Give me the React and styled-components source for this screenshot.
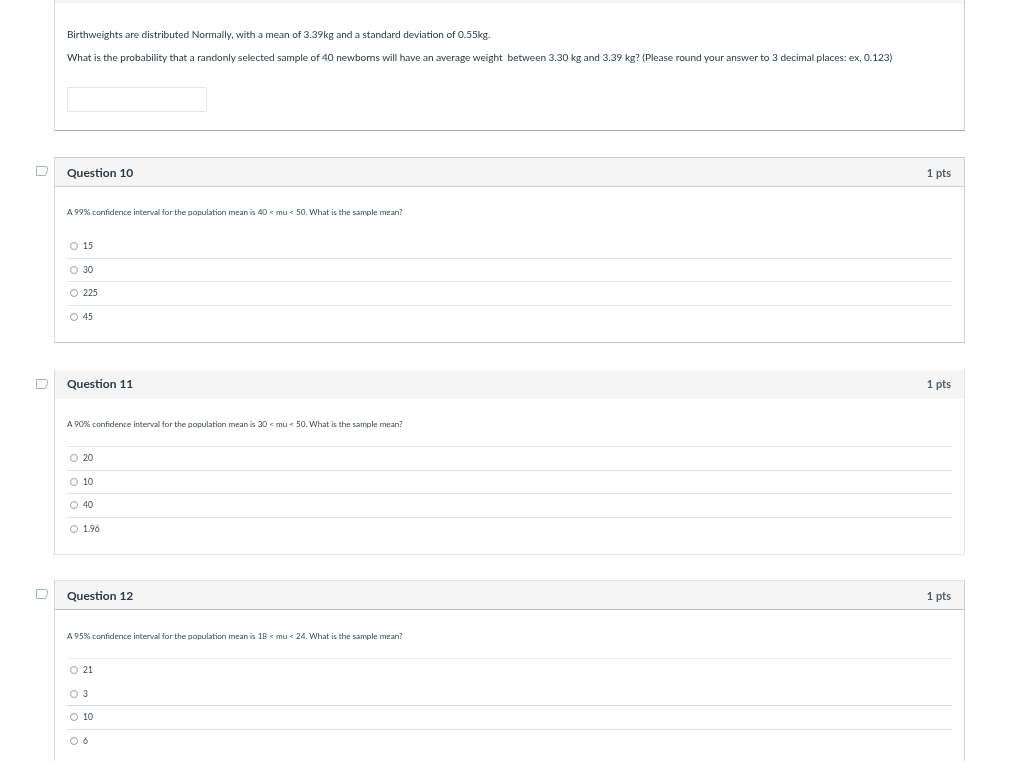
import React from 'react';
import styled, { createGlobalStyle } from 'styled-components';

const GlobalStyle = createGlobalStyle`
  html, body {
    margin: 0;
    padding: 0;
    background: #fff;
    height: 761px;
    overflow: hidden;
    font-family: Lato, "Liberation Sans", sans-serif;
    color: #2d3b45;
  }
`;

const Page = styled.div`
  display: flex;
  flex-direction: column;
  width: 911px;
  height: 761px;
  margin-left: 54px;
  filter: blur(0.25px);
`;

const Question = styled.section`
  position: relative;
  flex: none;
  box-sizing: border-box;
  height: ${(p) => p.$height}px;
  margin-bottom: ${(p) => p.$gap}px;
  border-left: 1px solid #d8d8d8;
  border-right: 1px solid ${(p) => p.$sideColor || '#d0d0d0'};
  border-bottom: 1px solid ${(p) => p.$bottomColor || '#c4c4c4'};
`;

const Flag = styled.svg`
  position: absolute;
  left: -20px;
  top: 8px;
  width: 14px;
  height: 12px;
`;

const Header = styled.header`
  box-sizing: border-box;
  display: flex;
  justify-content: space-between;
  align-items: center;
  height: ${(p) => p.$height || 30}px;
  padding: 0 13px ${(p) => (p.$topColor ? 0 : 2)}px 12px;
  background: #f5f5f5;
  border-top: ${(p) => (p.$topColor ? `1px solid ${p.$topColor}` : 'none')};
  border-bottom: 1px solid ${(p) => p.$lineColor || '#d0d0d0'};
`;

const Title = styled.h2`
  margin: 0;
  font-size: 12px;
  font-weight: 700;
  color: #2d3a44;
`;

const Points = styled.span`
  font-size: 11px;
  font-weight: 700;
  color: #525d65;
`;

const Body = styled.div`
  padding: ${(p) => p.$top}px 12px 0;
`;

const Paragraph = styled.p`
  margin: 0 0 ${(p) => p.$after || 0}px;
  font-size: 10.02px;
  line-height: 12px;
  color: #2c3942;
  white-space: pre;
`;

const Prompt = styled.p`
  margin: 0;
  font-size: 8.14px;
  line-height: 10px;
  color: #3a454d;
`;

const AnswerInput = styled.input`
  display: block;
  box-sizing: border-box;
  width: 140px;
  height: 25px;
  margin-top: 24px;
  border: 1px solid #e6e6e6;
  border-radius: 1px;
  background: #fff;
  outline: none;
`;

const Answers = styled.ul`
  list-style: none;
  margin: ${(p) => p.$top}px 0 0;
  padding: 0;
`;

const Answer = styled.li`
  box-sizing: border-box;
  display: flex;
  align-items: center;
  gap: 5px;
  height: ${(p) => p.$height || 23.6}px;
  padding-left: 3px;
  border-top: 1px solid ${(p) => p.$lineColor || 'transparent'};
`;

const Radio = styled.span`
  box-sizing: border-box;
  flex: none;
  width: 8px;
  height: 8px;
  border: 1px solid #9a9fa3;
  border-radius: 50%;
  background: #fff;
`;

const AnswerLabel = styled.span`
  font-size: 8.5px;
  color: #3a454d;
`;

const FlagIcon = () => (
  <Flag viewBox="0 0 14 12" aria-hidden="true">
    <path d="M1.5 1.5h9.5q1 0 1.5 1.5v2.5l-2 5H1.5z" fill="none" stroke="#9fb4c6" strokeWidth="1" />
  </Flag>
);

const questions = [
  {
    number: 10,
    height: 186,
    gap: 27,
    headerTop: '#cfcfcf',
    prompt: 'A 99% confidence interval for the population mean is 40 < mu < 50. What is the sample mean?',
    promptTop: 20,
    answersTop: 17,
    answers: [['15'], ['30', '#e2e2e2'], ['225', '#e6e6e6'], ['45', '#e6e6e6']],
  },
  {
    number: 11,
    height: 185,
    gap: 25,
    headerHeight: 29,
    lineColor: '#f5f5f5',
    sideColor: '#e4e4e4',
    bottomColor: '#e8e8e8',
    prompt: 'A 90% confidence interval for the population mean is 30 < mu < 50. What is the sample mean?',
    promptTop: 20,
    answersTop: 17,
    answers: [['20', '#e6e6e6'], ['10', '#e2e2e2'], ['40', '#e2e2e2'], ['1.96', '#e2e2e2']],
  },
  {
    number: 12,
    height: 181,
    gap: 0,
    headerTop: '#e4e4e4',
    lineColor: '#bdbdbd',
    bottomColor: 'transparent',
    prompt: 'A 95% confidence interval for the population mean is 18 < mu < 24. What is the sample mean?',
    promptTop: 21,
    answersTop: 17,
    answers: [['21', '#f1f1f1'], ['3'], ['10', '#d6d6d6'], ['6', '#e2e2e2']],
  },
];

const App = () => (
  <>
    <GlobalStyle />
    <Page>
      <Question $height={131} $gap={26} $bottomColor="#a8a8a8">
        <Header $height={3} $lineColor="#f0f0f0" />
        <Body $top={25}>
          <Paragraph $after={11}>Birthweights are distributed Normally, with a mean of 3.39kg and a standard deviation of 0.55kg.</Paragraph>
          <Paragraph>What is the probability that a randonly selected sample of 40 newborns will have an average weight  between 3.30 kg and 3.39 kg? (Please round your answer to 3 decimal places: ex, 0.123)</Paragraph>
          <AnswerInput type="text" aria-label="Answer" />
        </Body>
      </Question>
      {questions.map((q) => (
        <Question key={q.number} $height={q.height} $gap={q.gap} $sideColor={q.sideColor} $bottomColor={q.bottomColor}>
          <FlagIcon />
          <Header $height={q.headerHeight} $topColor={q.headerTop} $lineColor={q.lineColor}>
            <Title>Question {q.number}</Title>
            <Points>1 pts</Points>
          </Header>
          <Body $top={q.promptTop}>
            <Prompt>{q.prompt}</Prompt>
            <Answers $top={q.answersTop}>
              {q.answers.map(([label, line]) => (
                <Answer key={label} $lineColor={line}>
                  <Radio />
                  <AnswerLabel>{label}</AnswerLabel>
                </Answer>
              ))}
            </Answers>
          </Body>
        </Question>
      ))}
    </Page>
  </>
);

export default App;
